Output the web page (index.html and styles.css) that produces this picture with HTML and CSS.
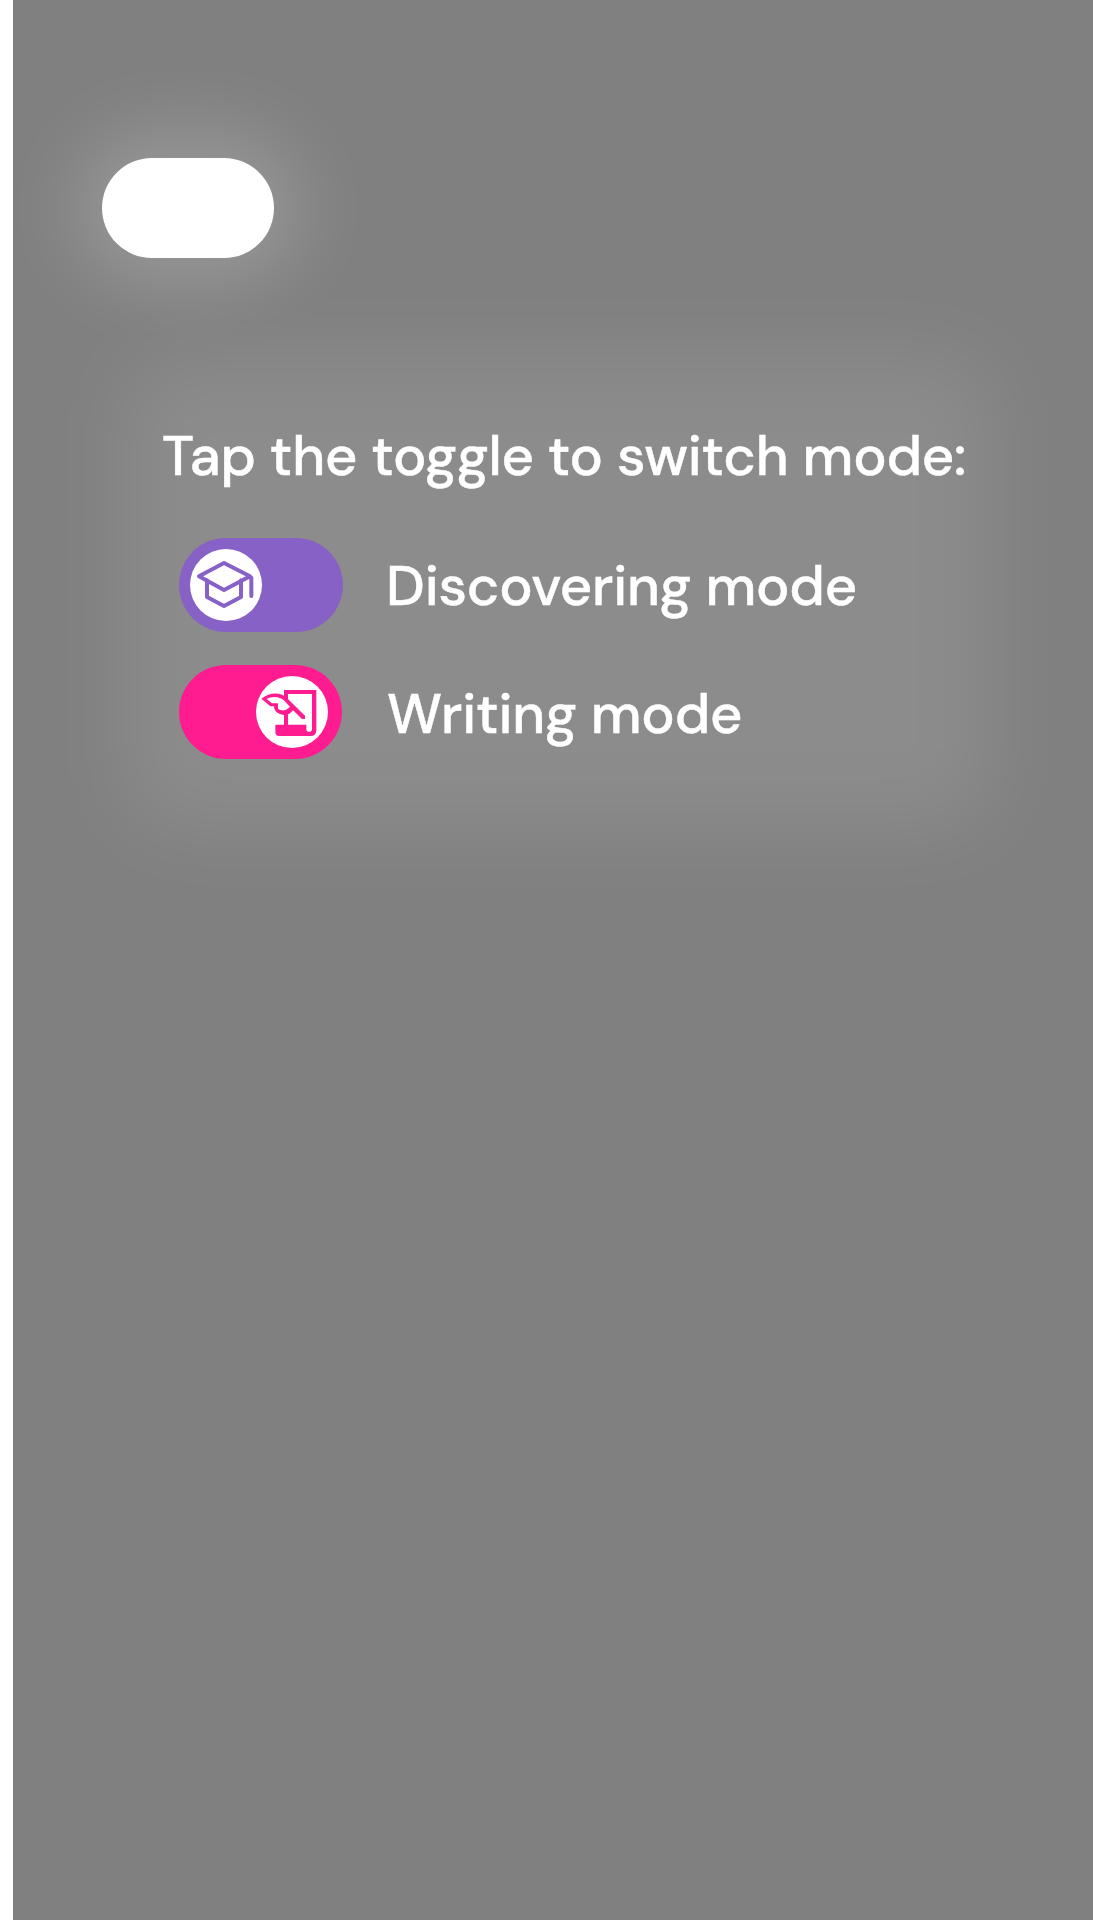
FILE: index.html
```html
<!DOCTYPE html>
<html lang="en">
<head>
<meta charset="utf-8">
<title>Mode switch</title>
<link rel="stylesheet" href="styles.css">
</head>
<body>
<main class="overlay">
  <div class="spotlight"></div>
  <section class="hint">
    <h1 class="hint-title">Tap the toggle to switch mode:</h1>
    <div class="mode">
      <div class="toggle toggle-discover">
        <span class="knob">
          <svg viewBox="6 6 216 216" width="72" height="72" fill="none" stroke="#8761c5" stroke-width="12" stroke-linejoin="round" stroke-linecap="round">
            <path d="M108 48L33 88L108 129L186 88ZM190 92V147M57 100V150L108 177L159 150V100"/>
          </svg>
        </span>
      </div>
      <span class="mode-label">Discovering mode</span>
    </div>
    <div class="mode">
      <div class="toggle toggle-write">
        <span class="knob">
          <svg viewBox="6 6 216 216" width="72" height="72" fill="#ff1c91">
            <path fill-rule="evenodd" d="M90 48H187V170a16 16 0 0 1-16 16H76a12 12 0 0 1-12-12V152H90ZM102 60H174V165a8.500 8.500 0 0 1-17 0V152H102Z"/>
            <path d="M22 74C50 52 82 54 101 74L153 125V135H144L117 109C110 119 101 124 89 123C73 121 60 113 60 97H49Z"/>
            <path fill="#fff" d="M38 75C55 66 77 67 91 80L108 98C97 110 83 112 72 104V88H54Z"/>
          </svg>
        </span>
      </div>
      <span class="mode-label">Writing mode</span>
    </div>
  </section>
</main>
</body>
</html>
```

FILE: styles.css
```css
* { box-sizing: border-box; }

body {
  margin: 0;
  background: #fff;
  font-family: "DM Sans", "Open Sans", sans-serif;
  font-weight: 500;
  color: #fff;
}

.overlay {
  min-height: 1920px;
  margin-left: 13px;
  padding: 158px 0 0 89px;
  background: #808080;
  overflow: hidden;
}

.spotlight {
  width: 172px;
  height: 100px;
  border-radius: 50px;
  background: #fff;
  box-shadow: 0 0 76px 26px rgba(255, 255, 255, .19);
}

.hint {
  position: relative;
  width: 866px;
  height: 470px;
  margin: 100px 0 0 24px;
  padding: 61px 0 0 53px;
}

/* soft light behind the hint */
.hint::before {
  content: "";
  position: absolute;
  inset: 0;
  border-radius: 50px;
  background: rgba(255, 255, 255, .095);
  filter: blur(40px);
}

.hint-title,
.mode {
  position: relative;
  margin: 0;
  font-size: 56px;
  font-weight: 500;
  line-height: 74px;
  letter-spacing: -.22px;
  white-space: nowrap;
  -webkit-text-stroke: .5px #fff;
}

.hint-title {
  height: 119px;
  margin-left: -17px;
}

.mode {
  display: flex;
  gap: 43px;
  margin-bottom: 33px;
}

.mode-label { padding-top: 11px; }

.toggle {
  display: flex;
  align-items: center;
  width: 164px;
  height: 94px;
  padding: 0 11px;
  border-radius: 47px;
}

.toggle-discover { background: #8761c5; }

.toggle-write {
  justify-content: flex-end;
  width: 163px;
  padding-right: 14px;
  background: #ff1c91;
}

.toggle-write + .mode-label { padding: 12px 0 0 2px; }

.knob {
  display: flex;
  width: 72px;
  height: 72px;
  border-radius: 50%;
  background: #fff;
}

.knob svg { flex: none; }
```
